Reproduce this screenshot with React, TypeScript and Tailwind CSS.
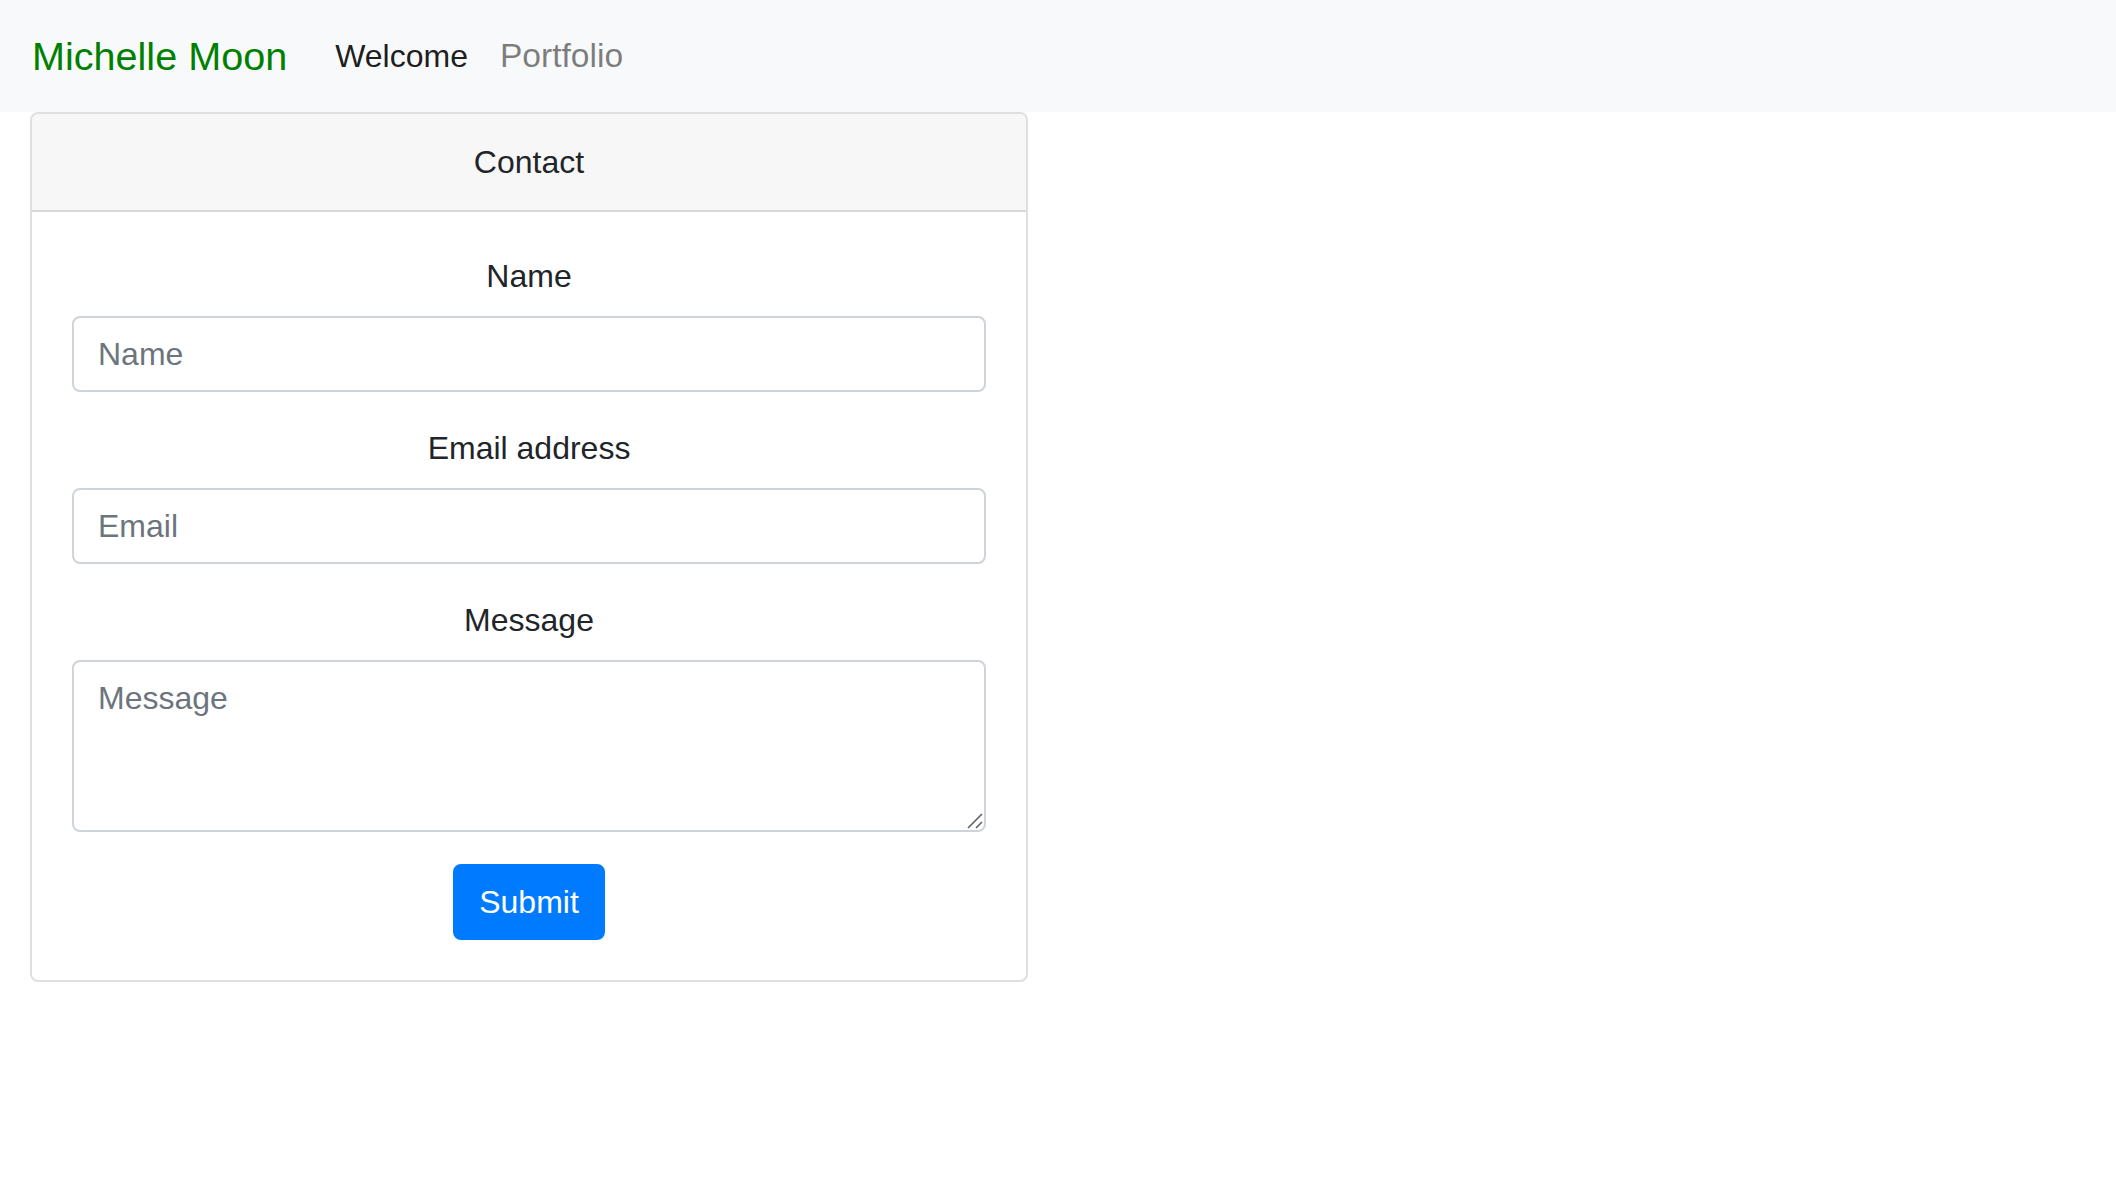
export default function App() {
  return (
    <div
      className="min-h-[1202px] bg-white text-[#212529] text-[32px] leading-[1.5]"
      style={{ fontFamily: '"Liberation Sans", Arial, sans-serif' }}
    >
      {/* Navbar */}
      <nav className="flex items-center h-[112px] bg-[#f8f9fa] px-[32px]">
        <a href="#" className="text-[39.6px] leading-[60px] text-[#008000] mr-[32px]">
          Michelle Moon
        </a>
        <div className="flex items-center">
          <a href="#" className="px-[16px] text-[32px] text-black/90">
            Welcome
          </a>
          <a href="#" className="px-[16px] text-[33.6px] text-black/50">
            Portfolio
          </a>
        </div>
      </nav>

      {/* Contact card */}
      <div className="px-[30px]">
        <div className="w-[998px] border-2 border-black/[0.125] rounded-[8px] overflow-hidden">
          <div className="bg-black/[0.03] border-b-2 border-black/[0.125] px-[40px] py-[24px] text-center">
            Contact
          </div>
          <form className="p-[40px] text-center" onSubmit={(e) => e.preventDefault()}>
            <div className="mb-[32px]">
              <label className="inline-block mb-[16px]">Name</label>
              <input
                type="text"
                placeholder="Name"
                className="block w-full h-[76px] px-[24px] py-[12px] border-2 border-[#ced4da] rounded-[8px] text-[32px] text-[#495057] placeholder:text-[#6c757d] outline-none"
              />
            </div>
            <div className="mb-[32px]">
              <label className="inline-block mb-[16px]">Email address</label>
              <input
                type="email"
                placeholder="Email"
                className="block w-full h-[76px] px-[24px] py-[12px] border-2 border-[#ced4da] rounded-[8px] text-[32px] text-[#495057] placeholder:text-[#6c757d] outline-none"
              />
            </div>
            <div className="mb-[32px]">
              <label className="inline-block mb-[16px]">Message</label>
              <div className="relative">
                <textarea
                  rows={3}
                  placeholder="Message"
                  className="block w-full h-[172px] px-[24px] py-[12px] border-2 border-[#ced4da] rounded-[8px] text-[32px] leading-[48px] text-[#495057] placeholder:text-[#6c757d] outline-none resize-none"
                />
                {/* resize grip */}
                <svg
                  className="absolute right-[3px] bottom-[3px] pointer-events-none"
                  width="16"
                  height="16"
                  viewBox="0 0 16 16"
                >
                  <path d="M1 15 L15 1" stroke="#fff" strokeWidth="1.2" transform="translate(0.8 0.8)" />
                  <path d="M1 15 L15 1" stroke="#5f5f5f" strokeWidth="1.6" />
                  <path d="M9 15 L15 9" stroke="#fff" strokeWidth="1.2" transform="translate(0.8 0.8)" />
                  <path d="M9 15 L15 9" stroke="#5f5f5f" strokeWidth="1.6" />
                </svg>
              </div>
            </div>
            <button
              type="submit"
              className="inline-block h-[76px] px-[24px] bg-[#007bff] text-white rounded-[8px] text-[32px] leading-[48px] border-2 border-[#007bff]"
            >
              Submit
            </button>
          </form>
        </div>
      </div>
    </div>
  )
}
